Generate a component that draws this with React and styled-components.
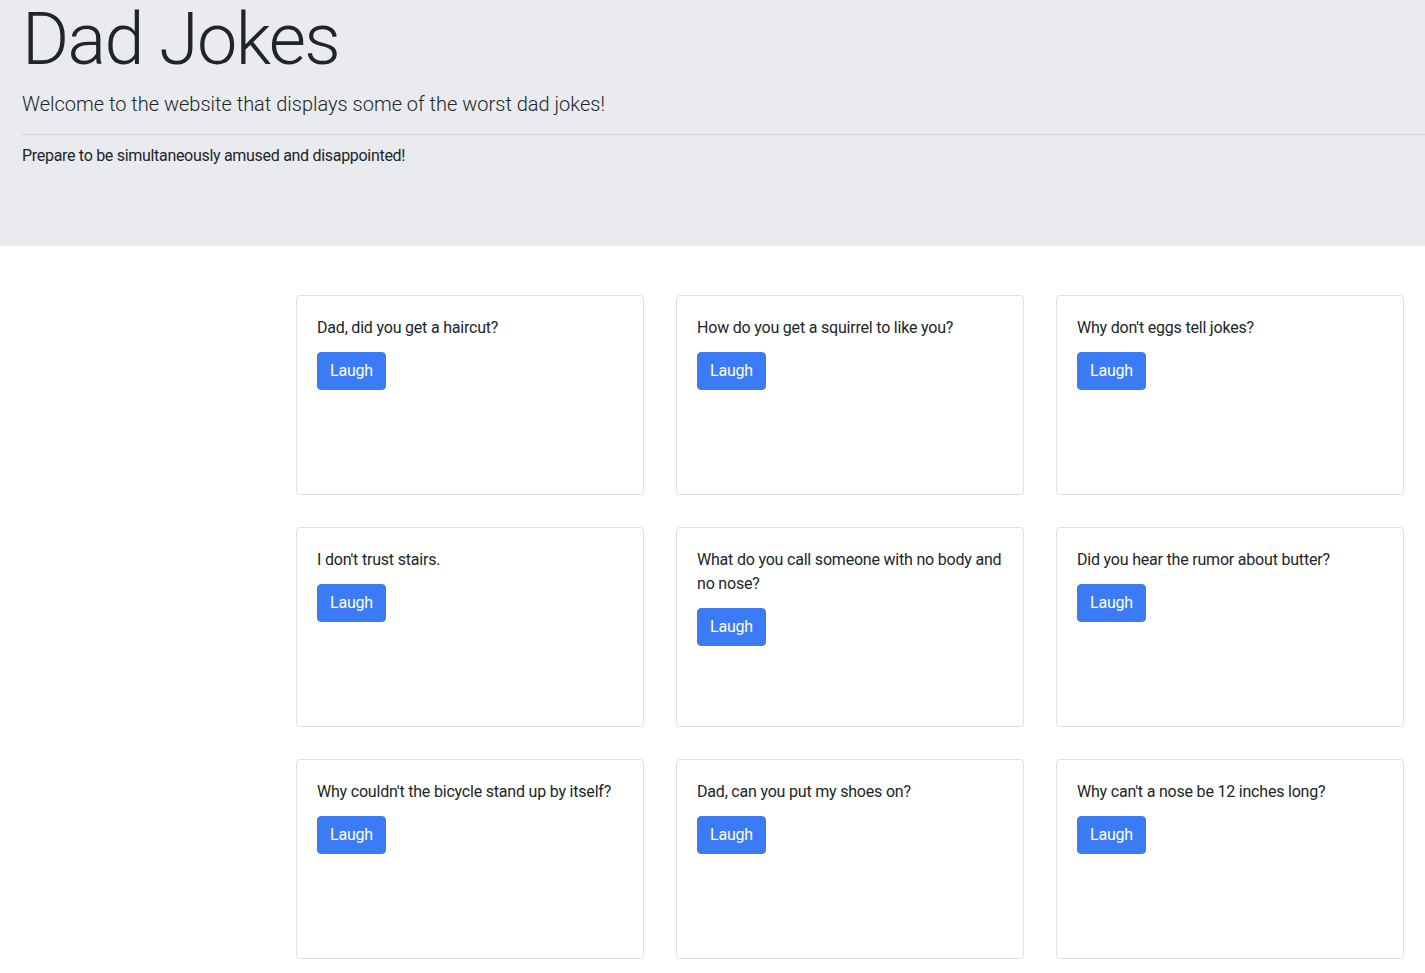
import React from "react";
import styled, { createGlobalStyle } from "styled-components";

const Global = createGlobalStyle`
  html, body { margin: 0; padding: 0; background: #fff; }
  body {
    font-family: Roboto, "Noto Sans", "Liberation Sans", sans-serif;
    color: #212529;
    font-size: 16px;
    line-height: 1.5;
  }
  * { box-sizing: border-box; }
`;

const Header = styled.header`
  display: flex;
  flex-direction: column;
  background: #e9ebef;
  height: 246px;
  padding: 0 0 0 22px;
`;

const Title = styled.h1`
  margin: 0;
  font-size: 72px;
  font-weight: 300;
  line-height: 80px;
  letter-spacing: -1.6px;
`;

const Lead = styled.p`
  margin: 9px 0 0;
  font-size: 20px;
  font-weight: 300;
  line-height: 30px;
`;

const Rule = styled.hr`
  width: 100%;
  margin: 15px 0 9px;
  border: 0;
  border-top: 1px solid #d0d2d6;
`;

const Note = styled.p`
  margin: 0;
  font-size: 16px;
  line-height: 24px;
  letter-spacing: -0.3px;
`;

const Grid = styled.main`
  display: grid;
  grid-template-columns: repeat(3, 348px);
  column-gap: 32px;
  row-gap: 32px;
  padding: 49px 0 0 296px;
`;

const Card = styled.div`
  height: 200px;
  border: 1px solid #dfdfdf;
  border-radius: 4px;
  padding: 20px;
  background: #fff;
`;

const Joke = styled.p`
  margin: 0 0 12px;
  font-size: 16px;
  line-height: 24px;
  letter-spacing: -0.2px;
`;

const Button = styled.button`
  font-family: inherit;
  font-size: 16px;
  line-height: 24px;
  color: #fff;
  background: #3b7cf6;
  border: 1px solid #3b7cf6;
  border-radius: 4px;
  padding: 6px 12px;
  letter-spacing: -0.2px;
  cursor: pointer;
`;

const jokes = [
  "Dad, did you get a haircut?",
  "How do you get a squirrel to like you?",
  "Why don't eggs tell jokes?",
  "I don't trust stairs.",
  "What do you call someone with no body and no nose?",
  "Did you hear the rumor about butter?",
  "Why couldn't the bicycle stand up by itself?",
  "Dad, can you put my shoes on?",
  "Why can't a nose be 12 inches long?",
];

export default function App() {
  return (
    <>
      <Global />
      <Header>
        <Title>Dad Jokes</Title>
        <Lead>Welcome to the website that displays some of the worst dad jokes!</Lead>
        <Rule />
        <Note>Prepare to be simultaneously amused and disappointed!</Note>
      </Header>
      <Grid>
        {jokes.map((j) => (
          <Card key={j}>
            <Joke>{j}</Joke>
            <Button>Laugh</Button>
          </Card>
        ))}
      </Grid>
    </>
  );
}
